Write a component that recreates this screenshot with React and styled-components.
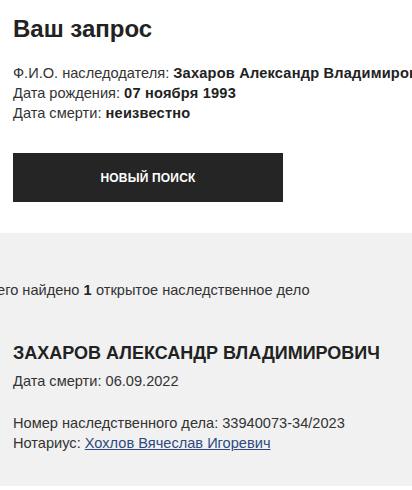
import React from "react";
import styled, { createGlobalStyle } from "styled-components";

const Global = createGlobalStyle`
  html, body { margin: 0; padding: 0; background: #fff; }
  body { font-family: "Liberation Sans", Arial, sans-serif; color: #222; overflow: hidden; }
`;

const Page = styled.div`
  width: 412px;
  overflow: hidden;
`;

const Request = styled.section`
  padding: 15px 13px 31px;
`;

const Title = styled.h1`
  margin: 0;
  font-size: 24px;
  line-height: 28px;
  font-weight: 700;
  color: #222;
`;

const Info = styled.div`
  margin-top: 20px;
  font-size: 14.6px;
  line-height: 20px;
  color: #333;
  white-space: nowrap;
`;

const Line = styled.div``;

const Strong = styled.b`
  font-weight: 700;
  color: #222;
  letter-spacing: 0.2px;
`;

const Button = styled.button`
  display: block;
  margin-top: 30px;
  width: 270px;
  height: 49px;
  border: 0;
  background: #252525;
  color: #fff;
  font-family: "Liberation Sans", Arial, sans-serif;
  font-size: 12px;
  font-weight: 700;
  letter-spacing: 0.2px;
  text-transform: uppercase;
  cursor: pointer;
`;

const Results = styled.section`
  background: #f1f1f1;
  padding: 47px 13px 33px;
`;

const Count = styled.div`
  margin-left: -33px;
  font-size: 14.6px;
  line-height: 20px;
  color: #333;
  white-space: nowrap;
`;

const Card = styled.article`
  margin-top: 41px;
`;

const CardTitle = styled.h2`
  margin: 0;
  font-size: 18px;
  line-height: 24px;
  font-weight: 700;
  color: #222;
  white-space: nowrap;
`;

const Text = styled.div`
  font-size: 14.6px;
  line-height: 20px;
  color: #333;
  margin-top: ${(p) => p.$gap || 0}px;
`;

const Link = styled.a`
  color: #2d4a80;
  text-decoration: underline;
`;

export default function App() {
  return (
    <Page>
      <Global />
      <Request>
        <Title>Ваш запрос</Title>
        <Info>
          <Line>
            Ф.И.О. наследодателя: <Strong>Захаров Александр Владимирович</Strong>
          </Line>
          <Line>
            Дата рождения: <Strong>07 ноября 1993</Strong>
          </Line>
          <Line>
            Дата смерти: <Strong>неизвестно</Strong>
          </Line>
        </Info>
        <Button>Новый поиск</Button>
      </Request>
      <Results>
        <Count>
          Всего найдено <Strong>1</Strong> открытое наследственное дело
        </Count>
        <Card>
          <CardTitle>ЗАХАРОВ АЛЕКСАНДР ВЛАДИМИРОВИЧ</CardTitle>
          <Text $gap={6}>Дата смерти: 06.09.2022</Text>
          <Text $gap={22}>Номер наследственного дела: 33940073-34/2023</Text>
          <Text>
            Нотариус: <Link href="#">Хохлов Вячеслав Игоревич</Link>
          </Text>
        </Card>
      </Results>
    </Page>
  );
}
